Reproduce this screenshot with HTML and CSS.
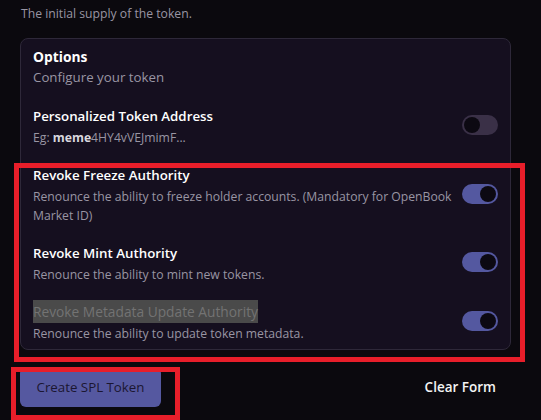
FILE: index.html
```html
<!DOCTYPE html>
<html lang="en">
<head>
<meta charset="utf-8">
<title>Token options</title>
<link rel="stylesheet" href="styles.css">
</head>
<body>
<div class="page">
  <p class="hint">The initial supply of the token.</p>
  <section class="card">
    <div class="card-head">
      <h3 class="card-title">Options</h3>
      <p class="card-sub">Configure your token</p>
    </div>
    <div class="opt">
      <div class="opt-text">
        <div class="opt-title">Personalized Token Address</div>
        <div class="opt-desc">Eg: <b class="em">meme</b>4HY4vVEJmimF...</div>
      </div>
      <span class="toggle"></span>
    </div>
    <div class="opt">
      <div class="opt-text">
        <div class="opt-title">Revoke Freeze Authority</div>
        <div class="opt-desc">Renounce the ability to freeze holder accounts. (Mandatory for OpenBook Market ID)</div>
      </div>
      <span class="toggle on"></span>
    </div>
    <div class="opt">
      <div class="opt-text">
        <div class="opt-title">Revoke Mint Authority</div>
        <div class="opt-desc">Renounce the ability to mint new tokens.</div>
      </div>
      <span class="toggle on"></span>
    </div>
    <div class="opt">
      <div class="opt-text">
        <div class="opt-title muted"><span class="hl">Revoke Metadata Update Authority</span></div>
        <div class="opt-desc">Renounce the ability to update token metadata.</div>
      </div>
      <span class="toggle on"></span>
    </div>
  </section>
  <div class="actions">
    <button class="btn-primary" type="button">Create SPL Token</button>
    <button class="btn-ghost" type="button">Clear Form</button>
  </div>
  <div class="mark mark-options"></div>
  <div class="mark mark-button"></div>
</div>
</body>
</html>
```
FILE: styles.css
```css
html, body {
  margin: 0;
  padding: 0;
  background: #0b090e;
}
body {
  font-family: "Open Sans", "Noto Sans", sans-serif;
  color: #f2f1f5;
  width: 541px;
  height: 420px;
  overflow: hidden;
}
.page {
  position: relative;
  padding-left: 20px;
  width: 491px;
}
.hint {
  margin: 4px 0 14px 1px;
  font-size: 12.2px;
  line-height: 20px;
  color: #9995a3;
}
.card {
  background: #150f1f;
  border: 1px solid #2e2839;
  border-radius: 8px;
  padding: 8px 12px 6px 12px;
  display: flex;
  flex-direction: column;
  gap: 18px;
}
.card-head {
  margin-bottom: 1px;
}
.card-title {
  margin: 0;
  font-size: 13.8px;
  line-height: 20px;
  font-weight: 700;
  color: #ffffff;
}
.card-sub {
  margin: 0;
  font-size: 13.3px;
  line-height: 20px;
  color: #9995a3;
}
.opt {
  display: flex;
  align-items: center;
  gap: 6px;
}
.opt-text {
  flex: 1;
  min-width: 0;
}
.opt-title {
  font-size: 13.3px;
  line-height: 20px;
  font-weight: 600;
  color: #ffffff;
}
.opt-title.muted {
  font-size: 13.75px;
  font-weight: 400;
  color: #737373;
}
.hl {
  background: #4a4a4a;
  padding: 2px 0;
}
.opt-desc {
  margin-top: 2px;
  font-size: 12.2px;
  line-height: 19px;
  color: #9995a3;
}
.em {
  font-weight: 700;
  color: #d9d7de;
}
.toggle {
  position: relative;
  flex: none;
  width: 36px;
  height: 20px;
  border-radius: 10px;
  background: #3a3047;
  margin-bottom: 3px;
}
.toggle::after {
  content: "";
  position: absolute;
  top: 2px;
  left: 2px;
  width: 16px;
  height: 16px;
  border-radius: 50%;
  background: #0c0912;
}
.toggle.on {
  background: #5458a0;
}
.toggle.on::after {
  left: 18px;
}
.actions {
  display: flex;
  justify-content: space-between;
  align-items: center;
  margin-top: 17px;
}
.btn-primary {
  height: 40px;
  width: 141px;
  border: 0;
  border-radius: 6px;
  background: #5558a0;
  color: #1b1631;
  font-family: inherit;
  font-size: 13.3px;
  font-weight: 500;
  padding: 0;
}
.btn-ghost {
  height: 40px;
  border: 0;
  background: transparent;
  color: #f4f4f4;
  font-family: inherit;
  font-size: 13.5px;
  font-weight: 600;
  padding: 0 15px;
}
.mark {
  position: absolute;
  border: 5px solid #e81e2a;
  box-sizing: border-box;
  pointer-events: none;
}
.mark-options {
  left: 14px;
  top: 159px;
  width: 511px;
  height: 199px;
}
.mark-button {
  left: 11px;
  top: 363px;
  width: 169px;
  height: 53px;
}
```
